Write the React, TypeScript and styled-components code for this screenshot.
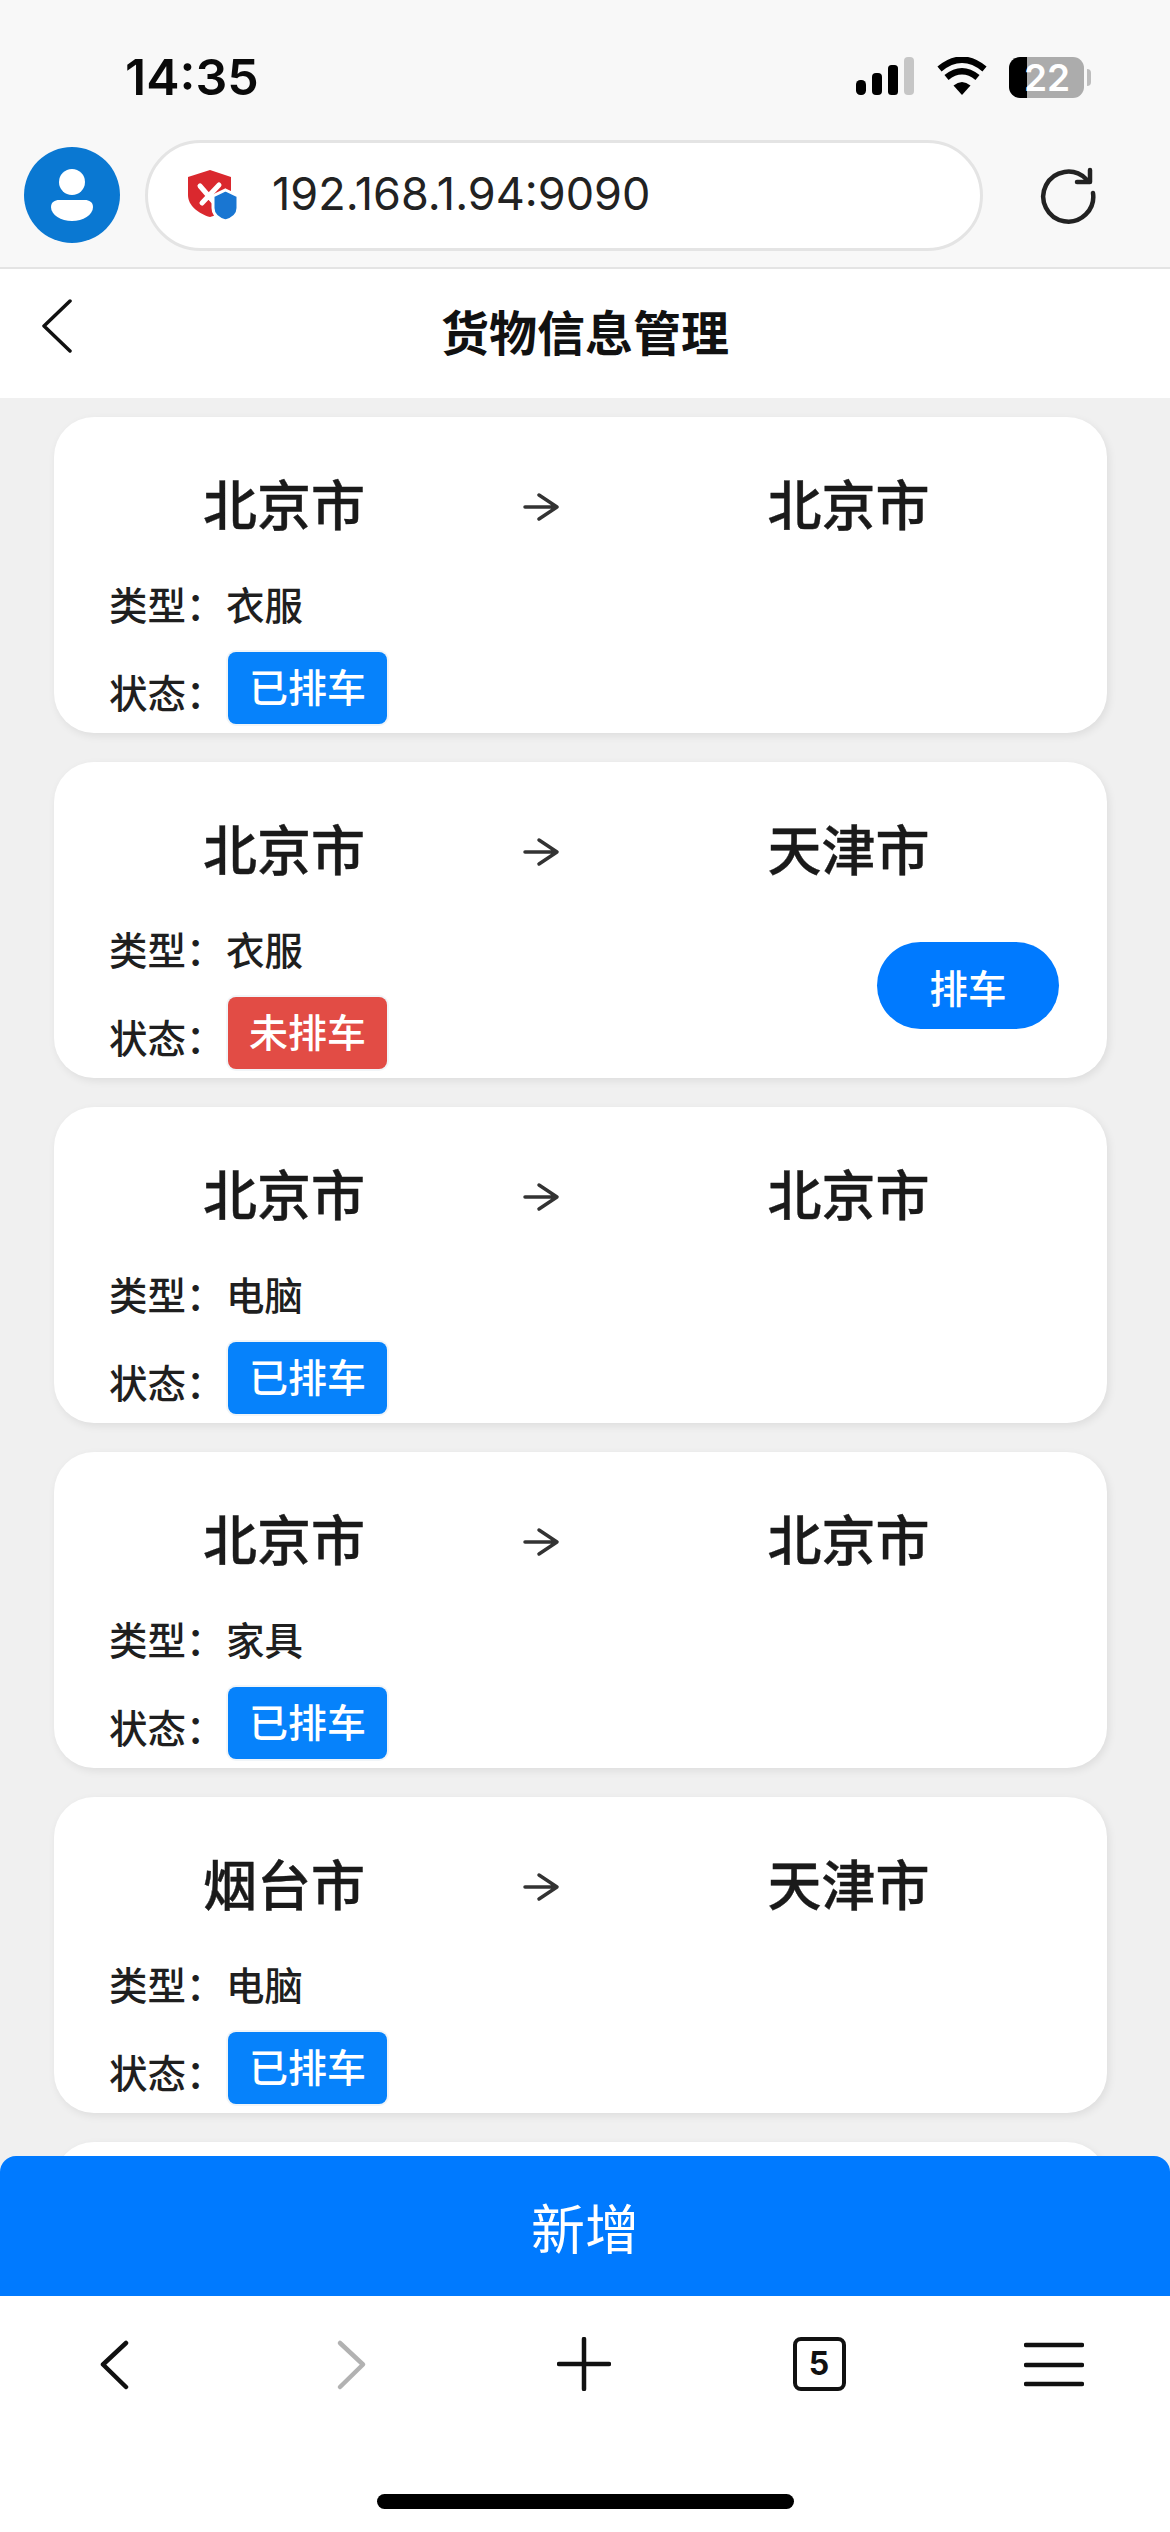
import React from "react";
import styled, { createGlobalStyle } from "styled-components";

const GlobalStyle = createGlobalStyle`
  html, body {
    margin: 0;
    padding: 0;
    background: #fff;
  }
  body {
    font-family: Inter, "Noto Sans CJK SC", sans-serif;
  }
`;

const Screen = styled.div`
  width: 1170px;
  height: 2532px;
  display: flex;
  flex-direction: column;
  overflow: hidden;
`;

/* browser chrome */
const StatusBar = styled.div`
  height: 130px;
  box-sizing: border-box;
  padding: 57px 86px 0 125px;
  background: #f8f8f8;
  display: flex;
  justify-content: space-between;
  align-items: flex-start;
`;

const Clock = styled.span`
  font-size: 50px;
  line-height: 40px;
  font-weight: 600;
  color: #0a0a0a;
`;

const StatusIcons = styled.div`
  display: flex;
  align-items: flex-start;
`;

const Battery = styled.div`
  position: relative;
  width: 75px;
  height: 41px;
  margin-left: 22px;
  border-radius: 11px;
  background: linear-gradient(90deg, #000 18px, #acacac 18px);
  color: #fff;
  font-size: 37px;
  line-height: 41px;
  font-weight: 600;
  text-align: right;
  padding-right: 14px;
  box-sizing: border-box;

  &::after {
    content: "";
    position: absolute;
    right: -7px;
    top: 12px;
    width: 4px;
    height: 17px;
    border-radius: 0 4px 4px 0;
    background: #bdbdbd;
  }
`;

const Toolbar = styled.div`
  height: 137px;
  box-sizing: border-box;
  padding: 10px 0 0 24px;
  background: #f8f8f8;
  display: flex;
  align-items: flex-start;
`;

const Avatar = styled.svg`
  width: 96px;
  height: 96px;
  margin-top: 7px;
  flex: none;
`;

const AddressBar = styled.div`
  width: 838px;
  height: 111px;
  margin-left: 25px;
  flex: none;
  box-sizing: border-box;
  border: 3px solid #e4e4e4;
  border-radius: 56px;
  background: #fff;
  display: flex;
  align-items: center;
  padding-left: 40px;
`;

const AddressText = styled.span`
  margin-left: 34px;
  font-size: 45px;
  font-weight: 400;
  color: #222;
  margin-top: -4px;
`;

const Reload = styled.svg`
  width: 58px;
  height: 58px;
  margin: 27px 0 0 56px;
  flex: none;
`;

/* page content */
const PageHeader = styled.header`
  height: 131px;
  box-sizing: border-box;
  border-top: 2px solid #e4e4e4;
  background: #fff;
  display: grid;
  grid-template-columns: 1fr auto 1fr;
  align-items: center;
`;

const BackLink = styled.svg`
  width: 32px;
  height: 54px;
  margin: 0 0 16px 41px;
`;

const PageTitle = styled.h1`
  margin: 0;
  font-size: 48px;
  line-height: 60px;
  font-weight: 600;
  color: #111;
`;

const Main = styled.main`
  position: relative;
  flex: 1;
  min-height: 0;
  overflow: hidden;
  background: #f0f0f0;
`;

const CardList = styled.div`
  padding: 19px 63px 0 54px;
  display: flex;
  flex-direction: column;
  gap: 29px;
`;

const Card = styled.article`
  height: 316px;
  flex: none;
  box-sizing: border-box;
  padding-top: 60px;
  border-radius: 40px;
  background: #fff;
  box-shadow: 2px 3px 8px rgba(0, 0, 0, 0.08);
`;

const Route = styled.div`
  display: grid;
  grid-template-columns: 460px 54px 539px;
  align-items: center;
  justify-items: center;
`;

const City = styled.span`
  font-size: 54px;
  line-height: 60px;
  font-weight: 500;
  -webkit-text-stroke: 0.4px #1a1a1a;
  color: #1a1a1a;
`;

const Destination = styled(City)`
  padding-left: 22px;
`;

const Arrow = styled.svg`
  width: 38px;
  height: 30px;
`;

const CardBody = styled.div`
  display: flex;
  justify-content: space-between;
  align-items: flex-start;
  padding: 41px 48px 0 55px;
`;

const InfoRow = styled.div`
  display: flex;
  align-items: center;
  height: 50px;
  font-size: 38.5px;
  font-weight: 500;
  color: #1f1f1f;
`;

const StatusRow = styled(InfoRow)`
  height: 72px;
  margin-top: 24px;
`;

const Label = styled.span`
  width: 117px;
  flex: none;
`;

const StatusLabel = styled(Label)`
  width: 119px;
  padding-top: 5px;
`;

const StatusTag = styled.span<{ $tone: "done" | "todo" }>`
  width: 159px;
  height: 72px;
  border-radius: 8px;
  background: ${(p) => (p.$tone === "done" ? "#0682fb" : "#e24c45")};
  box-shadow: 0 0 0 2px #f1f5f8;
  color: #fff;
  font-size: 39px;
  line-height: 72px;
  text-align: center;
`;

const ScheduleButton = styled.button`
  width: 182px;
  height: 87px;
  margin-top: 19px;
  padding: 0;
  border: none;
  border-radius: 44px;
  background: #007aff;
  color: #fff;
  font-family: inherit;
  font-size: 38.5px;
  font-weight: 500;
`;

const AddButton = styled.button`
  position: absolute;
  left: 0;
  right: 0;
  bottom: 0;
  height: 140px;
  padding: 0;
  border: none;
  border-radius: 16px 16px 0 0;
  background: #007aff;
  color: #fff;
  font-family: inherit;
  font-size: 54px;
`;

/* browser bottom bar */
const BottomBar = styled.nav`
  height: 236px;
  flex: none;
  background: #fff;
  display: flex;
  flex-direction: column;
  align-items: center;
`;

const NavIcons = styled.div`
  width: 100%;
  height: 95px;
  margin-top: 41px;
  box-sizing: border-box;
  padding: 0 86px 0 84px;
  display: flex;
  justify-content: space-between;
  align-items: flex-start;
`;

const NavSlot = styled.div`
  width: 60px;
  display: flex;
  justify-content: center;
`;

const NavIcon = styled.svg`
  height: 54px;
  flex: none;
`;

const TabCount = styled.div`
  width: 53px;
  height: 54px;
  box-sizing: border-box;
  border: 4px solid #111;
  border-radius: 8px;
  color: #111;
  font-size: 32px;
  line-height: 46px;
  font-weight: 700;
  text-align: center;
`;

const HomeIndicator = styled.div`
  width: 417px;
  height: 15px;
  margin-top: 62px;
  border-radius: 8px;
  background: #000;
`;

const SignalIcon = () => (
  <svg width="58" height="38" viewBox="0 0 58 38">
    <rect x="0" y="23" width="10" height="15" rx="4.5" fill="#000" />
    <rect x="16" y="16" width="10" height="22" rx="4" fill="#000" />
    <rect x="32" y="8" width="10" height="30" rx="3.5" fill="#000" />
    <rect x="48" y="0" width="10" height="38" rx="4" fill="#c6c6c6" />
  </svg>
);

const WifiIcon = () => (
  <svg width="50" height="38" viewBox="0 0 50 38" style={{ marginLeft: 23 }}>
    <path d="M25 38 L16.5 28.5 Q25 21.5 33.5 28.5 Z" fill="#000" />
    <path d="M9.5 20.5 Q25 8 40.5 20.5" fill="none" stroke="#000" strokeWidth="6.5" />
    <path d="M2.5 12 Q25 -6.5 47.5 12" fill="none" stroke="#000" strokeWidth="6.5" />
  </svg>
);

const cards = [
  { from: "北京市", to: "北京市", kind: "衣服", scheduled: true },
  { from: "北京市", to: "天津市", kind: "衣服", scheduled: false },
  { from: "北京市", to: "北京市", kind: "电脑", scheduled: true },
  { from: "北京市", to: "北京市", kind: "家具", scheduled: true },
  { from: "烟台市", to: "天津市", kind: "电脑", scheduled: true },
];

const App = () => {
  return (
    <Screen>
      <GlobalStyle />
      <StatusBar>
        <Clock>14:35</Clock>
        <StatusIcons>
          <SignalIcon />
          <WifiIcon />
          <Battery>22</Battery>
        </StatusIcons>
      </StatusBar>

      <Toolbar>
        <Avatar viewBox="0 0 96 96">
          <circle cx="48" cy="48" r="48" fill="#0a78d2" />
          <circle cx="48" cy="35" r="13" fill="#fff" />
          <path
            d="M27 60 C27 55 31 53 35 53 H61 C65 53 69 55 69 60 C69 68 59 74 48 74 C37 74 27 68 27 60 Z"
            fill="#fff"
          />
        </Avatar>
        <AddressBar>
          <svg width="50" height="51" viewBox="0 0 50 51">
            <path
              d="M22 0 L43 7 V25 C43 36 33 44 22 47 C11 44 0 36 0 25 V7 Z"
              fill="#da282e"
            />
            <path
              d="M12 16 L25 31 M31 15 L14 33"
              stroke="#fff"
              strokeWidth="5"
              strokeLinecap="round"
            />
            <path
              d="M37.5 20 L50 26 V38 C50 45 44 49 37.5 51 C31 49 25 45 25 38 V26 Z"
              fill="#1976d2"
              stroke="#fff"
              strokeWidth="3"
            />
          </svg>
          <AddressText>192.168.1.94:9090</AddressText>
        </AddressBar>
        <Reload viewBox="0 0 58 58" fill="none" stroke="#222" strokeWidth="4.5">
          <path d="M47 12 A25 25 0 1 0 54 26" strokeLinecap="round" />
          <path d="M51 3 V15 H38" strokeLinecap="round" strokeLinejoin="round" />
        </Reload>
      </Toolbar>

      <PageHeader>
        <BackLink viewBox="0 0 32 54" fill="none" stroke="#111" strokeWidth="3.5">
          <path d="M29 2 L3 27 L29 52" strokeLinecap="round" strokeLinejoin="round" />
        </BackLink>
        <PageTitle>货物信息管理</PageTitle>
      </PageHeader>

      <Main>
        <CardList>
          {cards.map((card, i) => (
            <Card key={i}>
              <Route>
                <City>{card.from}</City>
                <Arrow viewBox="0 0 38 30" fill="none" stroke="#333" strokeWidth="3.5">
                  <path d="M3 15 H35 M17 3 L35 15 L17 27" strokeLinecap="round" strokeLinejoin="round" />
                </Arrow>
                <Destination>{card.to}</Destination>
              </Route>
              <CardBody>
                <div>
                  <InfoRow>
                    <Label>类型：</Label>
                    {card.kind}
                  </InfoRow>
                  <StatusRow>
                    <StatusLabel>状态：</StatusLabel>
                    <StatusTag $tone={card.scheduled ? "done" : "todo"}>
                      {card.scheduled ? "已排车" : "未排车"}
                    </StatusTag>
                  </StatusRow>
                </div>
                {!card.scheduled && <ScheduleButton>排车</ScheduleButton>}
              </CardBody>
            </Card>
          ))}
          <Card />
        </CardList>
        <AddButton>新增</AddButton>
      </Main>

      <BottomBar>
        <NavIcons>
          <NavSlot>
            <NavIcon width={30} viewBox="0 0 30 54" fill="none" stroke="#111" strokeWidth="4.5">
              <path d="M27 6 L4 27.5 L27 50" strokeLinecap="round" strokeLinejoin="round" />
            </NavIcon>
          </NavSlot>
          <NavSlot>
            <NavIcon width={36} viewBox="0 0 36 54" fill="none" stroke="#b2b2b2" strokeWidth="4.5">
              <path d="M9 6 L32 27.5 L9 50" strokeLinecap="round" strokeLinejoin="round" />
            </NavIcon>
          </NavSlot>
          <NavSlot>
            <NavIcon width={54} viewBox="0 0 54 54" fill="none" stroke="#111" strokeWidth="4.5">
              <path d="M27 2 V52 M2 27 H52" strokeLinecap="round" />
            </NavIcon>
          </NavSlot>
          <NavSlot>
            <TabCount>5</TabCount>
          </NavSlot>
          <NavSlot>
            <NavIcon width={60} viewBox="0 0 60 54" fill="none" stroke="#111" strokeWidth="4.5">
              <path d="M2 8 H58 M2 28 H58 M2 47 H58" strokeLinecap="round" />
            </NavIcon>
          </NavSlot>
        </NavIcons>
        <HomeIndicator />
      </BottomBar>
    </Screen>
  );
};

export default App;
